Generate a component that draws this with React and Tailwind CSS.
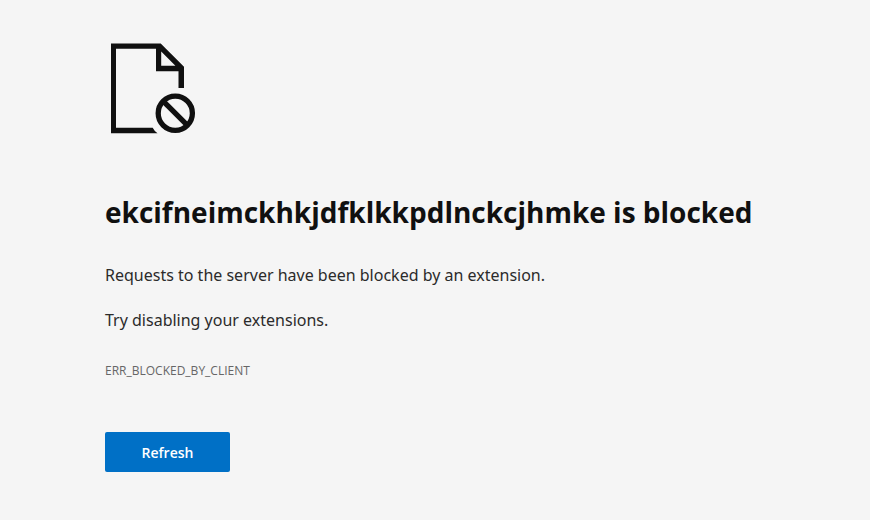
function BlockedPageIcon() {
    return (
        <svg
            className="w-[87px] h-[91px] ml-1"
            viewBox="0 0 87 91"
            fill="none"
            aria-hidden="true"
        >
            {/* page with a folded corner */}
            <path
                fill="#101010"
                fillRule="evenodd"
                d="M2 .4H51.7L75 23.7V45H69.5V28.2H47V5.8H7V84.8H43.7Q45.2 88 48.5 90.2H2ZM52.2 8.6V22.8H66.4Z"
            />
            <circle cx="66.3" cy="70.3" r="17.1" stroke="#101010" strokeWidth="5.3" />
            <path d="M54.4 58.4L78.2 82.2" stroke="#101010" strokeWidth="5.3" />
        </svg>
    );
}

export default function App() {
    return (
        <main className="min-h-screen bg-[#f5f5f5] pl-[105px] pr-8 pt-[43px] pb-12 font-['Noto_Sans',sans-serif] text-[#101010]">
            <BlockedPageIcon />
            <h1 className="mt-[58px] font-['Open_Sans',sans-serif] text-[28px] leading-10 font-bold">
                ekcifneimckhkjdfklkkpdlnckcjhmke is blocked
            </h1>
            <p className="mt-[31px] text-base leading-6 text-[#2b2b2b]">
                Requests to the server have been blocked by an extension.
            </p>
            <p className="mt-[21px] text-base leading-6 text-[#2b2b2b]">
                Try disabling your extensions.
            </p>
            <p className="mt-[31px] font-['Open_Sans',sans-serif] text-xs leading-4 text-[#666666]">
                ERR_BLOCKED_BY_CLIENT
            </p>
            <button
                type="button"
                className="mt-[53px] h-10 w-[125px] rounded-xs bg-[#0070c6] pt-px font-['Open_Sans',sans-serif] text-sm font-semibold text-white"
            >
                Refresh
            </button>
        </main>
    );
}
